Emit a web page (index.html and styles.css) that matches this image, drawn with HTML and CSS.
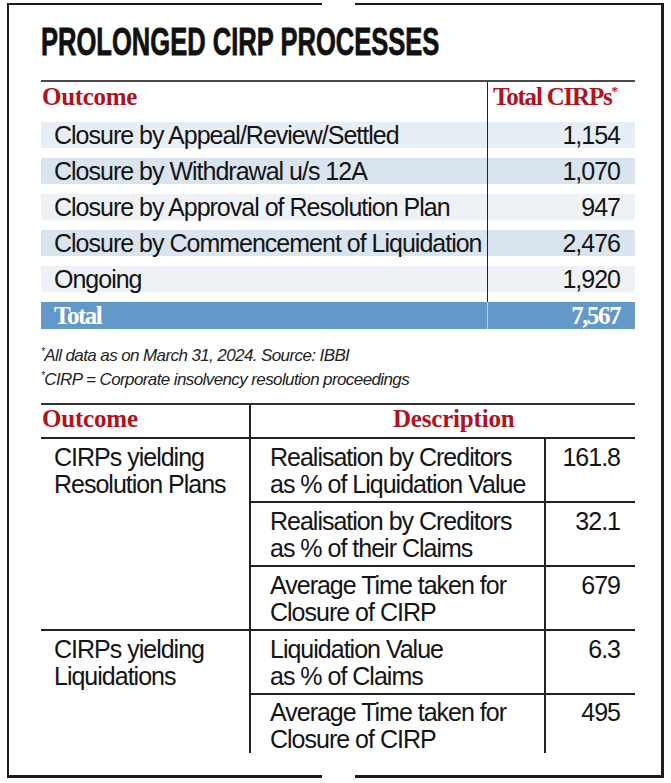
FILE: index.html
```html
<!DOCTYPE html>
<html lang="en">
<head>
<meta charset="utf-8">
<title>Prolonged CIRP Processes</title>
<link rel="stylesheet" href="styles.css">
</head>
<body>
<div class="frame">
  <h1 class="title"><span>PROLONGED CIRP PROCESSES</span></h1>

  <div class="t1">
    <div class="row head"><div class="lbl">Outcome</div><div class="num">Total CIRPs<sup>*</sup></div></div>
    <div class="row light"><div class="lbl">Closure by Appeal/Review/Settled</div><div class="num">1,154</div></div>
    <div class="row dark"><div class="lbl">Closure by Withdrawal u/s 12A</div><div class="num">1,070</div></div>
    <div class="row lighter"><div class="lbl">Closure by Approval of Resolution Plan</div><div class="num">947</div></div>
    <div class="row dark"><div class="lbl">Closure by Commencement of Liquidation</div><div class="num">2,476</div></div>
    <div class="row lighter"><div class="lbl">Ongoing</div><div class="num">1,920</div></div>
    <div class="row total"><div class="lbl">Total</div><div class="num">7,567</div></div>
  </div>

  <div class="notes">
    <p><sup>*</sup>All data as on March 31, 2024. Source: IBBI</p>
    <p><sup>*</sup>CIRP = Corporate insolvency resolution proceedings</p>
  </div>

  <div class="t2">
    <div class="th out">Outcome</div>
    <div class="th desc">Description</div>

    <div class="grp grp1">CIRPs yielding<br>Resolution Plans</div>
    <div class="d">Realisation by Creditors<br>as % of Liquidation Value</div>
    <div class="v">161.8</div>
    <div class="d">Realisation by Creditors<br>as % of their Claims</div>
    <div class="v">32.1</div>
    <div class="d">Average Time taken for<br>Closure of CIRP</div>
    <div class="v">679</div>

    <div class="grp grp2">CIRPs yielding<br>Liquidations</div>
    <div class="d">Liquidation Value<br>as % of Claims</div>
    <div class="v">6.3</div>
    <div class="d end">Average Time taken for<br>Closure of CIRP</div>
    <div class="v end">495</div>
  </div>
</div>
</body>
</html>
```

FILE: styles.css
```css
body {
  margin: 0;
  background: #fff;
  font-family: "Liberation Sans", Arial, sans-serif;
  color: #141414;
}

.frame {
  position: relative;
  box-sizing: border-box;
  width: 657px;
  height: 775px;
  margin: 3px 0 0 7px;
  border: 2px solid #1c1c1c;
  border-right-width: 3px;
  border-bottom-width: 3px;
  padding: 17px 26px 0 32px;
}

.frame::before,
.frame::after {
  content: "";
  position: absolute;
  left: 313px;
  width: 33px;
  background: #fff;
}
.frame::before { top: -2px; height: 2px; }
.frame::after { bottom: -3px; height: 3px; }

.title {
  margin: 0 0 18px;
  height: 40px;
  font: 700 39px/40px "Liberation Sans", Arial, sans-serif;
  white-space: nowrap;
  color: #111;
}
.title span {
  display: inline-block;
  transform: scaleX(0.655);
  transform-origin: 0 0;
  -webkit-text-stroke: 0.8px #111;
}

/* top table */
.t1 {
  border-top: 2px solid #4a4a4a;
  background: linear-gradient(#222, #222) no-repeat 446px 0 / 1px 100%;
}
.row {
  display: grid;
  grid-template-columns: 446px 148px;
  height: 26px;
  margin-top: 10px;
  font-size: 25px;
  line-height: 26px;
  letter-spacing: -1px;
  white-space: nowrap;
}
.row .lbl { padding-left: 13px; }
.row .num {
  border-left: 1px solid #222;
  text-align: right;
  padding-right: 15px;
}
.row.head {
  height: 30px;
  margin-top: 0;
  line-height: 30px;
  font-family: "Liberation Serif", "Times New Roman", serif;
  font-weight: 700;
  color: #b3121c;
  letter-spacing: -0.3px;
}
.row.head .lbl { padding-left: 1px; }
.row.head .num {
  border-left: none;
  text-align: left;
  padding-left: 6px;
  padding-right: 0;
  letter-spacing: -1.2px;
}
.row.head sup {
  font-size: 13px;
  line-height: 0;
  vertical-align: 10px;
  letter-spacing: 0;
}
.light { background: #e8eef5; }
.dark { background: #d9e4ee; }
.lighter { background: #eef2f7; }
.row.total {
  height: 27px;
  line-height: 27px;
  background: #6399c9;
  color: #fff;
  font-family: "Liberation Serif", "Times New Roman", serif;
  font-weight: 700;
  letter-spacing: -1.5px;
}
.row.total .num { border-left-color: rgba(255, 255, 255, 0.55); }

/* notes */
.notes {
  margin-top: 15px;
  font-style: italic;
  font-size: 17px;
  line-height: 24px;
  letter-spacing: -0.6px;
  color: #222;
}
.notes p { margin: 0; white-space: nowrap; }
.notes sup {
  font-size: 10px;
  line-height: 0;
  vertical-align: 6px;
}

/* bottom table */
.t2 {
  margin-top: 11px;
  border-top: 2px solid #333;
  display: grid;
  grid-template-columns: 208px 295px 91px;
  align-content: start;
  font-size: 25px;
  line-height: 27px;
  letter-spacing: -1px;
  white-space: nowrap;
}
.th {
  box-sizing: border-box;
  height: 34px;
  padding-bottom: 4px;
  line-height: 28px;
  border-bottom: 2px solid #222;
  font-family: "Liberation Serif", "Times New Roman", serif;
  font-weight: 700;
  color: #b3121c;
  letter-spacing: -0.2px;
}
.th.out { padding-left: 1px; }
.th.desc {
  grid-column: span 2;
  border-left: 2px solid #222;
  padding-left: 142px;
}
.grp {
  padding: 5px 0 3px 13px;
  border-bottom: 2px solid #222;
}
.grp1 { grid-row: span 3; }
.grp2 { grid-row: span 2; border-bottom: none; }
.d {
  border-left: 2px solid #222;
  border-bottom: 2px solid #222;
  padding: 5px 0 3px 19px;
}
.v {
  border-left: 2px solid #222;
  border-bottom: 2px solid #222;
  padding: 5px 15px 3px 0;
  text-align: right;
}
.end {
  border-bottom: none;
  padding-top: 4px;
  padding-bottom: 0;
}
```
